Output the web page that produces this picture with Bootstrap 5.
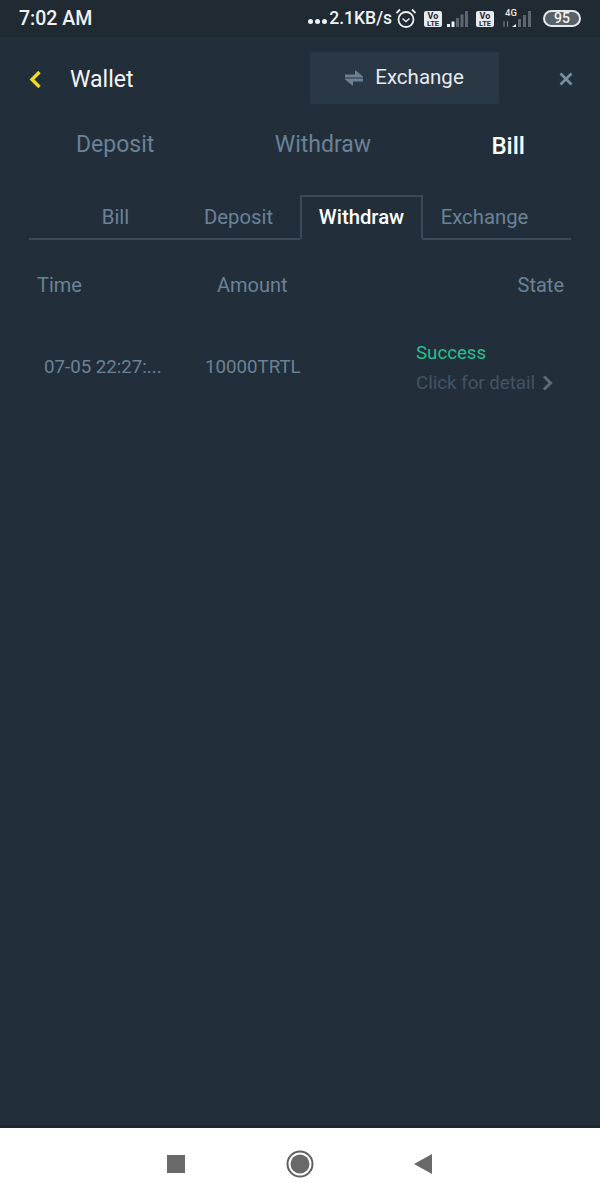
<!DOCTYPE html>
<html lang="en">
<head>
    <meta charset="UTF-8">
    <meta name="viewport" content="width=device-width, initial-scale=1.0">
    <title>Wallet</title>
    <link href="https://cdn.jsdelivr.net/npm/bootstrap@5.3.0/dist/css/bootstrap.min.css" rel="stylesheet">
    <style>
        html, body { height: 100%; }
        body { background: #222f3b; font-family: Roboto, "Liberation Sans", sans-serif; color: #fff; }
        .screen { height: 1200px; width: 600px; overflow: hidden; }
        .status-bar { height: 37px; background: #1f2a33; padding: 0 19px; font-weight: 500; color: #f0f2f4; }
        .status-time { font-size: 19.500px; }
        .status-speed { font-size: 17.500px; margin-right: 4px; }
        .status-dots { gap: 2px; margin-right: 2px; }
        .status-dots i { width: 5px; height: 5px; border-radius: 50%; background: #f0f2f4; display: block; margin-top: 5px; }
        .battery { width: 38px; height: 17px; border: 2px solid #e6e9ec; border-radius: 9px; font-size: 14px; line-height: 13px; text-align: center; background: #58616a; margin-left: 9px; }
        .main-area { flex: 1 1 auto; border-bottom: 3px solid #1d2831; }
        .wallet-head { height: 84px; padding-left: 29px; padding-right: 27px; }
        .wallet-title { font-size: 23px; margin-left: 28px; padding-top: 2px; color: #f2f4f6; }
        .exchange-btn { width: 189px; height: 52px; margin: 0 60px 3px auto; background: #2a3744; border-radius: 2px; font-size: 20.500px; color: #e6eaee; border: 0; gap: 12px; padding: 0; }
        .big-tabs { padding: 1px 75px 0 76px; height: 48px; font-size: 23px; color: #6a8297; }
        .big-tabs .on { color: #fff; font-weight: 500; font-size: 24px; }
        .bill-tabs { margin: 26px 29px 0; border-bottom: 2px solid #3a4a58; height: 45px; }
        .bill-tabs .nav-link { width: 123px; height: 45px; padding: 5px 0 0; text-align: center; font-size: 20.300px; color: #6a8297; background: transparent; border: 2px solid transparent; border-radius: 0; margin-bottom: -2px; }
        .bill-tabs .nav-link.active { color: #fff; font-weight: 500; background: #222f3b; border-color: #3a4a58 #3a4a58 #222f3b; }
        .col-heads { display: grid; grid-template-columns: 180px 1fr auto; padding: 0 36px 0 37px; margin-top: 33px; font-size: 20px; line-height: 24px; color: #6a8297; }
        .bill-row { display: grid; grid-template-columns: 161px 211px 1fr; padding-left: 44px; margin-top: 39px; height: 60px; align-items: center; font-size: 18.700px; color: #6a8297; }
        .state-stack { padding-top: 2px; }
        .state-ok { color: #24c08e; line-height: 30px; }
        .state-more { color: #435362; line-height: 30px; gap: 7px; }
        .nav-bar { height: 72px; background: #fff; padding-bottom: 1px; }
        .nav-bar svg { display: block; }
        .nav-icons { width: 266px; }
        .back-tri { margin-right: 1px; }
    </style>
</head>
<body>
    <div class="screen d-flex flex-column">
        <div class="status-bar d-flex align-items-center justify-content-between">
            <span class="status-time">7:02 AM</span>
            <div class="d-flex align-items-center">
                <span class="status-dots d-flex"><i></i><i></i><i></i></span>
                <span class="status-speed">2.1KB/s</span>
                <svg width="20" height="21" viewBox="0 0 20 21" fill="none" stroke="#eef0f2"><circle cx="10" cy="11.500" r="7.500" stroke-width="1.800"/><path d="M6.500 10.500l3.500 3 3.500-3" stroke-width="1.400"/><path d="M0.500 5L4 1.500M19.500 5L16 1.500" stroke-width="1.800"/></svg>
                <svg class="ms-2" width="44" height="24" viewBox="0 0 44 24"><rect x="0" y="4" width="18" height="16" rx="2" fill="#e8eaec"/><text x="9" y="11.500" font-size="9" font-weight="700" font-family="Roboto" text-anchor="middle" fill="#1f2a33">Vo</text><text x="9" y="18.500" font-size="7.500" font-weight="700" font-family="Roboto" text-anchor="middle" fill="#1f2a33">LTE</text><path d="M23 17h3v3h-3zM27.500 14.500h3V20h-3z" fill="#eef0f2"/><path d="M32 11h3v9h-3zM36.500 7.500h3V20h-3zM41 4h3v16h-3z" fill="#5d666e"/></svg>
                <svg class="ms-2" width="58" height="24" viewBox="0 0 58 24"><rect x="0" y="4" width="18" height="16" rx="2" fill="#e8eaec"/><text x="9" y="11.500" font-size="9" font-weight="700" font-family="Roboto" text-anchor="middle" fill="#1f2a33">Vo</text><text x="9" y="18.500" font-size="7.500" font-weight="700" font-family="Roboto" text-anchor="middle" fill="#1f2a33">LTE</text><text x="35" y="8.500" font-size="9.500" font-weight="500" font-family="Roboto" text-anchor="middle" fill="#e8eaec">4G</text><path d="M27.500 14h1v6h-1zM31 14h1v6h-1z" fill="#7b848c"/><path d="M36 20l4-3v3z" fill="#eef0f2"/><path d="M42 12h3v8h-3zM47 8h3v12h-3zM52 4h3v16h-3z" fill="#5d666e"/></svg>
                <div class="battery">95</div>
            </div>
        </div>
        <div class="main-area">
            <div class="wallet-head d-flex align-items-center">
                <svg width="13" height="19" viewBox="0 0 13 19" fill="none"><path d="M10.500 2L3 9.500l7.500 7.500" stroke="#f5d91f" stroke-width="3.400"/></svg>
                <span class="wallet-title">Wallet</span>
                <button class="exchange-btn btn d-flex align-items-center justify-content-center" type="button">
                    <svg width="18" height="16" viewBox="0 0 18 16" fill="#6d8091"><path d="M10 0l8 6.500V7.500H0V4.500h10zM8 16L0 9.500V8.500h18v3H8z"/></svg>
                    Exchange
                </button>
                <svg width="14" height="14" viewBox="0 0 14 14" fill="none"><path d="M1.500 1.500l11 11M12.500 1.500l-11 11" stroke="#7b8e9f" stroke-width="2.600"/></svg>
            </div>
            <div class="big-tabs d-flex justify-content-between align-items-center">
                <span>Deposit</span>
                <span>Withdraw</span>
                <span class="on">Bill</span>
            </div>
            <ul class="nav bill-tabs justify-content-center">
                <li class="nav-item"><a class="nav-link" href="#">Bill</a></li>
                <li class="nav-item"><a class="nav-link" href="#">Deposit</a></li>
                <li class="nav-item"><a class="nav-link active" href="#">Withdraw</a></li>
                <li class="nav-item"><a class="nav-link" href="#">Exchange</a></li>
            </ul>
            <div class="col-heads">
                <span>Time</span>
                <span>Amount</span>
                <span>State</span>
            </div>
            <div class="bill-row">
                <span>07-05 22:27:...</span>
                <span>10000TRTL</span>
                <div class="state-stack">
                    <div class="state-ok">Success</div>
                    <div class="state-more d-flex align-items-center">Click for detail
                        <svg width="11" height="16" viewBox="0 0 11 16" fill="none"><path d="M2 1.500l6.500 6.500-6.500 6.500" stroke="#5b6b79" stroke-width="3"/></svg>
                    </div>
                </div>
            </div>
        </div>
        <div class="nav-bar d-flex align-items-center justify-content-center">
            <div class="nav-icons d-flex align-items-center justify-content-between">
                <svg width="18" height="18" viewBox="0 0 18 18"><rect width="18" height="18" fill="#696969"/></svg>
                <svg width="28" height="28" viewBox="0 0 28 28"><circle cx="14" cy="14" r="12.500" fill="none" stroke="#5f5f5f" stroke-width="2"/><circle cx="14" cy="14" r="9.500" fill="#696969"/></svg>
                <svg class="back-tri" width="18" height="20" viewBox="0 0 18 20"><path d="M18 0v20L0 10z" fill="#696969"/></svg>
            </div>
        </div>
    </div>
    <script src="https://cdn.jsdelivr.net/npm/bootstrap@5.3.0/dist/js/bootstrap.bundle.min.js"></script>
</body>
</html>
